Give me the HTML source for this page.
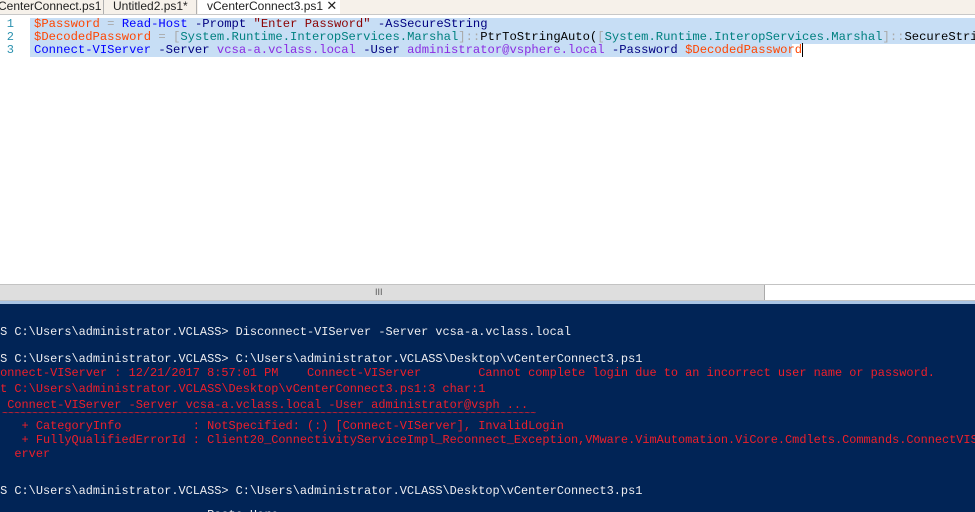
<!DOCTYPE html>
<html style="overflow:hidden"><head><style>
body{margin:0;width:975px;height:512px;overflow:hidden;background:#fff;position:relative;font-family:"Liberation Mono",monospace}
.tabs{position:absolute;left:0;top:0;width:975px;height:14px;background:#f6f1ea;border-bottom:1px solid #c8c8c8;font-family:"Liberation Sans",sans-serif;font-size:12px;overflow:hidden}
.tab{position:absolute;top:0;height:14px;line-height:12px;color:#222;white-space:nowrap}
.sep{position:absolute;top:0;width:1px;height:14px;background:#b0b0b0}
.code{position:absolute;left:0;top:18px;width:975px;height:40px;overflow:hidden;font-size:12.2px;line-height:13px;white-space:pre}
.ln{position:absolute;left:4px;width:10px;text-align:right;color:#2b91af;font-size:12px}
.sel{position:absolute;background:#c7def5;height:13px}
.l{position:absolute;left:34px;white-space:pre}
.v{color:#ff4500}.c{color:#0000ff}.s{color:#8b0000}.p{color:#000080}.o{color:#a9a9a9}.t{color:#008080}.k{color:#000}.m{color:#8a2be2}
.sb{position:absolute;left:0;top:284px;width:975px;height:15px;background:#fff;border-top:1px solid #c3c3c3;border-bottom:1px solid #c3c3c3}
.thumb{position:absolute;left:0;top:0;width:764px;height:15px;background:#dedede;border-right:1px solid #aaa}
.con{position:absolute;left:0;top:301px;width:975px;height:211px;background:#012456;border-top:3px solid #a9c4e4;overflow:hidden}
.cl{position:absolute;left:-7px;font-size:11.9px;line-height:14px;white-space:pre;color:#eeedf0}
.r{color:#ef1f2a}
</style></head><body>
<div class="tabs">
<div class="tab" style="left:-8px">vCenterConnect.ps1</div>
<div class="sep" style="left:103px"></div>
<div class="tab" style="left:113px">Untitled2.ps1*</div>
<div class="sep" style="left:196px"></div>
<div class="tab" style="left:198px;width:142px;height:15px;background:#fff;padding-left:9px;box-sizing:border-box">vCenterConnect3.ps1 <span style="font-size:13px">✕</span></div>
</div>
<div class="code">
<div class="sel" style="left:30px;top:0;width:945px"></div>
<div class="sel" style="left:30px;top:13px;width:945px"></div>
<div class="sel" style="left:30px;top:26px;width:762px"></div>
<div class="ln" style="top:0">1</div><div class="ln" style="top:13px">2</div><div class="ln" style="top:26px">3</div>
<div class="l" style="top:0"><span class="v">$Password</span> <span class="o">=</span> <span class="c">Read-Host</span> <span class="p">-Prompt</span> <span class="s">"Enter Password"</span> <span class="p">-AsSecureString</span></div>
<div class="l" style="top:13px"><span class="v">$DecodedPassword</span> <span class="o">=</span> <span class="o">[</span><span class="t">System.Runtime.InteropServices.Marshal</span><span class="o">]::</span><span class="k">PtrToStringAuto(</span><span class="o">[</span><span class="t">System.Runtime.InteropServices.Marshal</span><span class="o">]::</span><span class="k">SecureStringToBSTR</span></div>
<div class="l" style="top:26px"><span class="c">Connect-VIServer</span> <span class="p">-Server</span> <span class="m">vcsa-a.vclass.local</span> <span class="p">-User</span> <span class="m">administrator@vsphere.local</span> <span class="p">-Password</span> <span class="v">$DecodedPassword</span><span style="border-left:1px solid #000"></span></div>
</div>
<div class="sb"><div class="thumb"></div><div style="position:absolute;left:375px;top:2px;font-size:9px;color:#555;font-family:'Liberation Sans'">III</div></div>
<div class="con">
<div class="cl" style="top:21px">PS C:\Users\administrator.VCLASS> Disconnect-VIServer -Server vcsa-a.vclass.local</div>
<div class="cl" style="top:48px">PS C:\Users\administrator.VCLASS> C:\Users\administrator.VCLASS\Desktop\vCenterConnect3.ps1</div>
<div class="cl r" style="top:62px">Connect-VIServer : 12/21/2017 8:57:01 PM    Connect-VIServer        Cannot complete login due to an incorrect user name or password.</div>
<div class="cl r" style="top:78px">At C:\Users\administrator.VCLASS\Desktop\vCenterConnect3.ps1:3 char:1</div>
<div class="cl r" style="top:94px">+ Connect-VIServer -Server vcsa-a.vclass.local -User administrator@vsph ...</div>
<div class="cl r" style="top:104px;font-size:10px;left:2px">~~~~~~~~~~~~~~~~~~~~~~~~~~~~~~~~~~~~~~~~~~~~~~~~~~~~~~~~~~~~~~~~~~~~~~~~~~~~~~~~~~~~~~~~~</div>
<div class="cl r" style="top:115px">    + CategoryInfo          : NotSpecified: (:) [Connect-VIServer], InvalidLogin</div>
<div class="cl r" style="top:129px">    + FullyQualifiedErrorId : Client20_ConnectivityServiceImpl_Reconnect_Exception,VMware.VimAutomation.ViCore.Cmdlets.Commands.ConnectVIS</div>
<div class="cl r" style="top:143px">   erver</div>
<div class="cl" style="top:180px">PS C:\Users\administrator.VCLASS> C:\Users\administrator.VCLASS\Desktop\vCenterConnect3.ps1</div>
<div class="cl" style="top:204px">                              Paste Here</div>
</div>
</body></html>
